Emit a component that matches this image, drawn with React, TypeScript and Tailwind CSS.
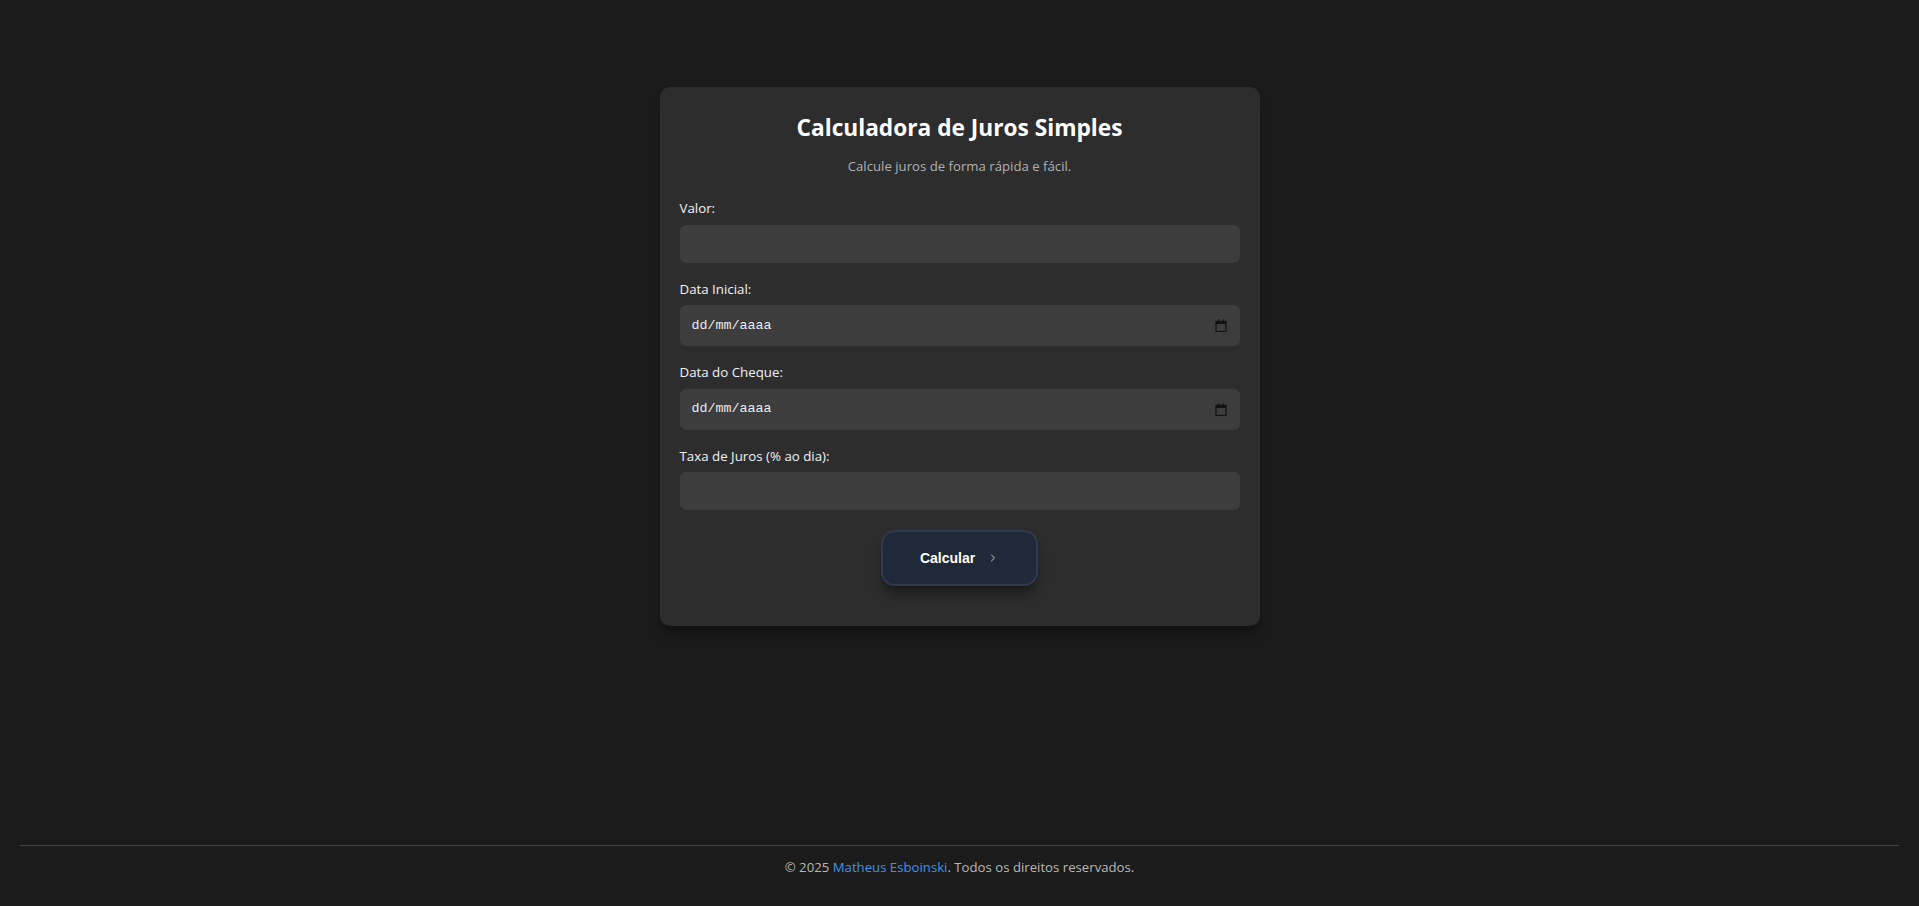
import { ChevronRight } from 'lucide-react';

const FIELDS = [
  { id: 'valor', label: 'Valor:', type: 'text' },
  { id: 'dataInicial', label: 'Data Inicial:', type: 'date' },
  { id: 'dataCheque', label: 'Data do Cheque:', type: 'date' },
  { id: 'taxa', label: 'Taxa de Juros (% ao dia):', type: 'text' },
];

function CalendarGlyph() {
  return (
    <svg width="12" height="13" viewBox="0 0 12 13" className="shrink-0">
      <rect x="1" y="2.5" width="10" height="10" fill="none" stroke="#121212" strokeWidth="1.2" />
      <rect x="1" y="2.5" width="10" height="2.5" fill="#121212" />
      <rect x="3" y="0.5" width="1.3" height="2.5" fill="#121212" />
      <rect x="7.7" y="0.5" width="1.3" height="2.5" fill="#121212" />
    </svg>
  );
}

function Field({ id, label, type }: { id: string; label: string; type: string }) {
  return (
    <div className="mb-4 flex flex-col">
      <label htmlFor={id} className="mb-[6.5px] text-[13.3px] leading-5 text-[#f2f2f2]">
        {label}
      </label>
      {type === 'date' ? (
        // campo de data desenhado à mão pra manter o formato dd/mm/aaaa
        <div
          id={id}
          className="flex h-[41px] items-center justify-between rounded-md bg-[#3d3d3d] pl-3 pr-[13px]"
        >
          <span className="font-['Liberation_Mono',monospace] text-[13.33px] text-[#ececec]">dd/mm/aaaa</span>
          <CalendarGlyph />
        </div>
      ) : (
        <input
          id={id}
          type="text"
          className="h-[38px] w-full rounded-md bg-[#3d3d3d] px-3 text-sm text-white outline-none"
        />
      )}
    </div>
  );
}

export default function App() {
  return (
    <div className="flex min-h-screen flex-col bg-[#1b1b1b] font-['Segoe_UI','Open_Sans',sans-serif]">
      <main className="flex flex-1 justify-center pt-[87px]">
        <section className="h-fit w-[600px] rounded-[10px] bg-[#2d2d2d] px-5 pt-[25px] pb-10 shadow-lg shadow-black/30">
          <h1 className="text-center text-[22.7px] leading-8 font-bold text-white">Calculadora de Juros Simples</h1>
          <p className="mt-3 text-center text-[13.2px] leading-5 text-[#b0b0b0]">Calcule juros de forma rápida e fácil.</p>

          <form className="mt-[22px]" onSubmit={(e) => e.preventDefault()}>
            {FIELDS.map((f) => (
              <Field key={f.id} {...f} />
            ))}

            <div className="mt-5 flex justify-center">
              <button
                type="submit"
                className="flex h-[56px] items-center gap-3 rounded-[14px] border-2 border-[#2f3a4f] bg-[#1f2937] px-[37px] font-['Liberation_Sans',Arial,sans-serif] text-sm font-bold text-white shadow-lg shadow-black/40"
              >
                Calcular
                <ChevronRight size={12} strokeWidth={2} className="text-[#d0d0d0]" />
              </button>
            </div>
          </form>
        </section>
      </main>

      <footer className="mx-5 border-t border-[#454545] pt-[11px] pb-[29px] text-center text-[13.2px] leading-5 text-[#b8b8b8]">
        © 2025 <a href="#" className="text-[#3d95e8]">Matheus Esboinski</a>. Todos os direitos reservados.
      </footer>
    </div>
  );
}
